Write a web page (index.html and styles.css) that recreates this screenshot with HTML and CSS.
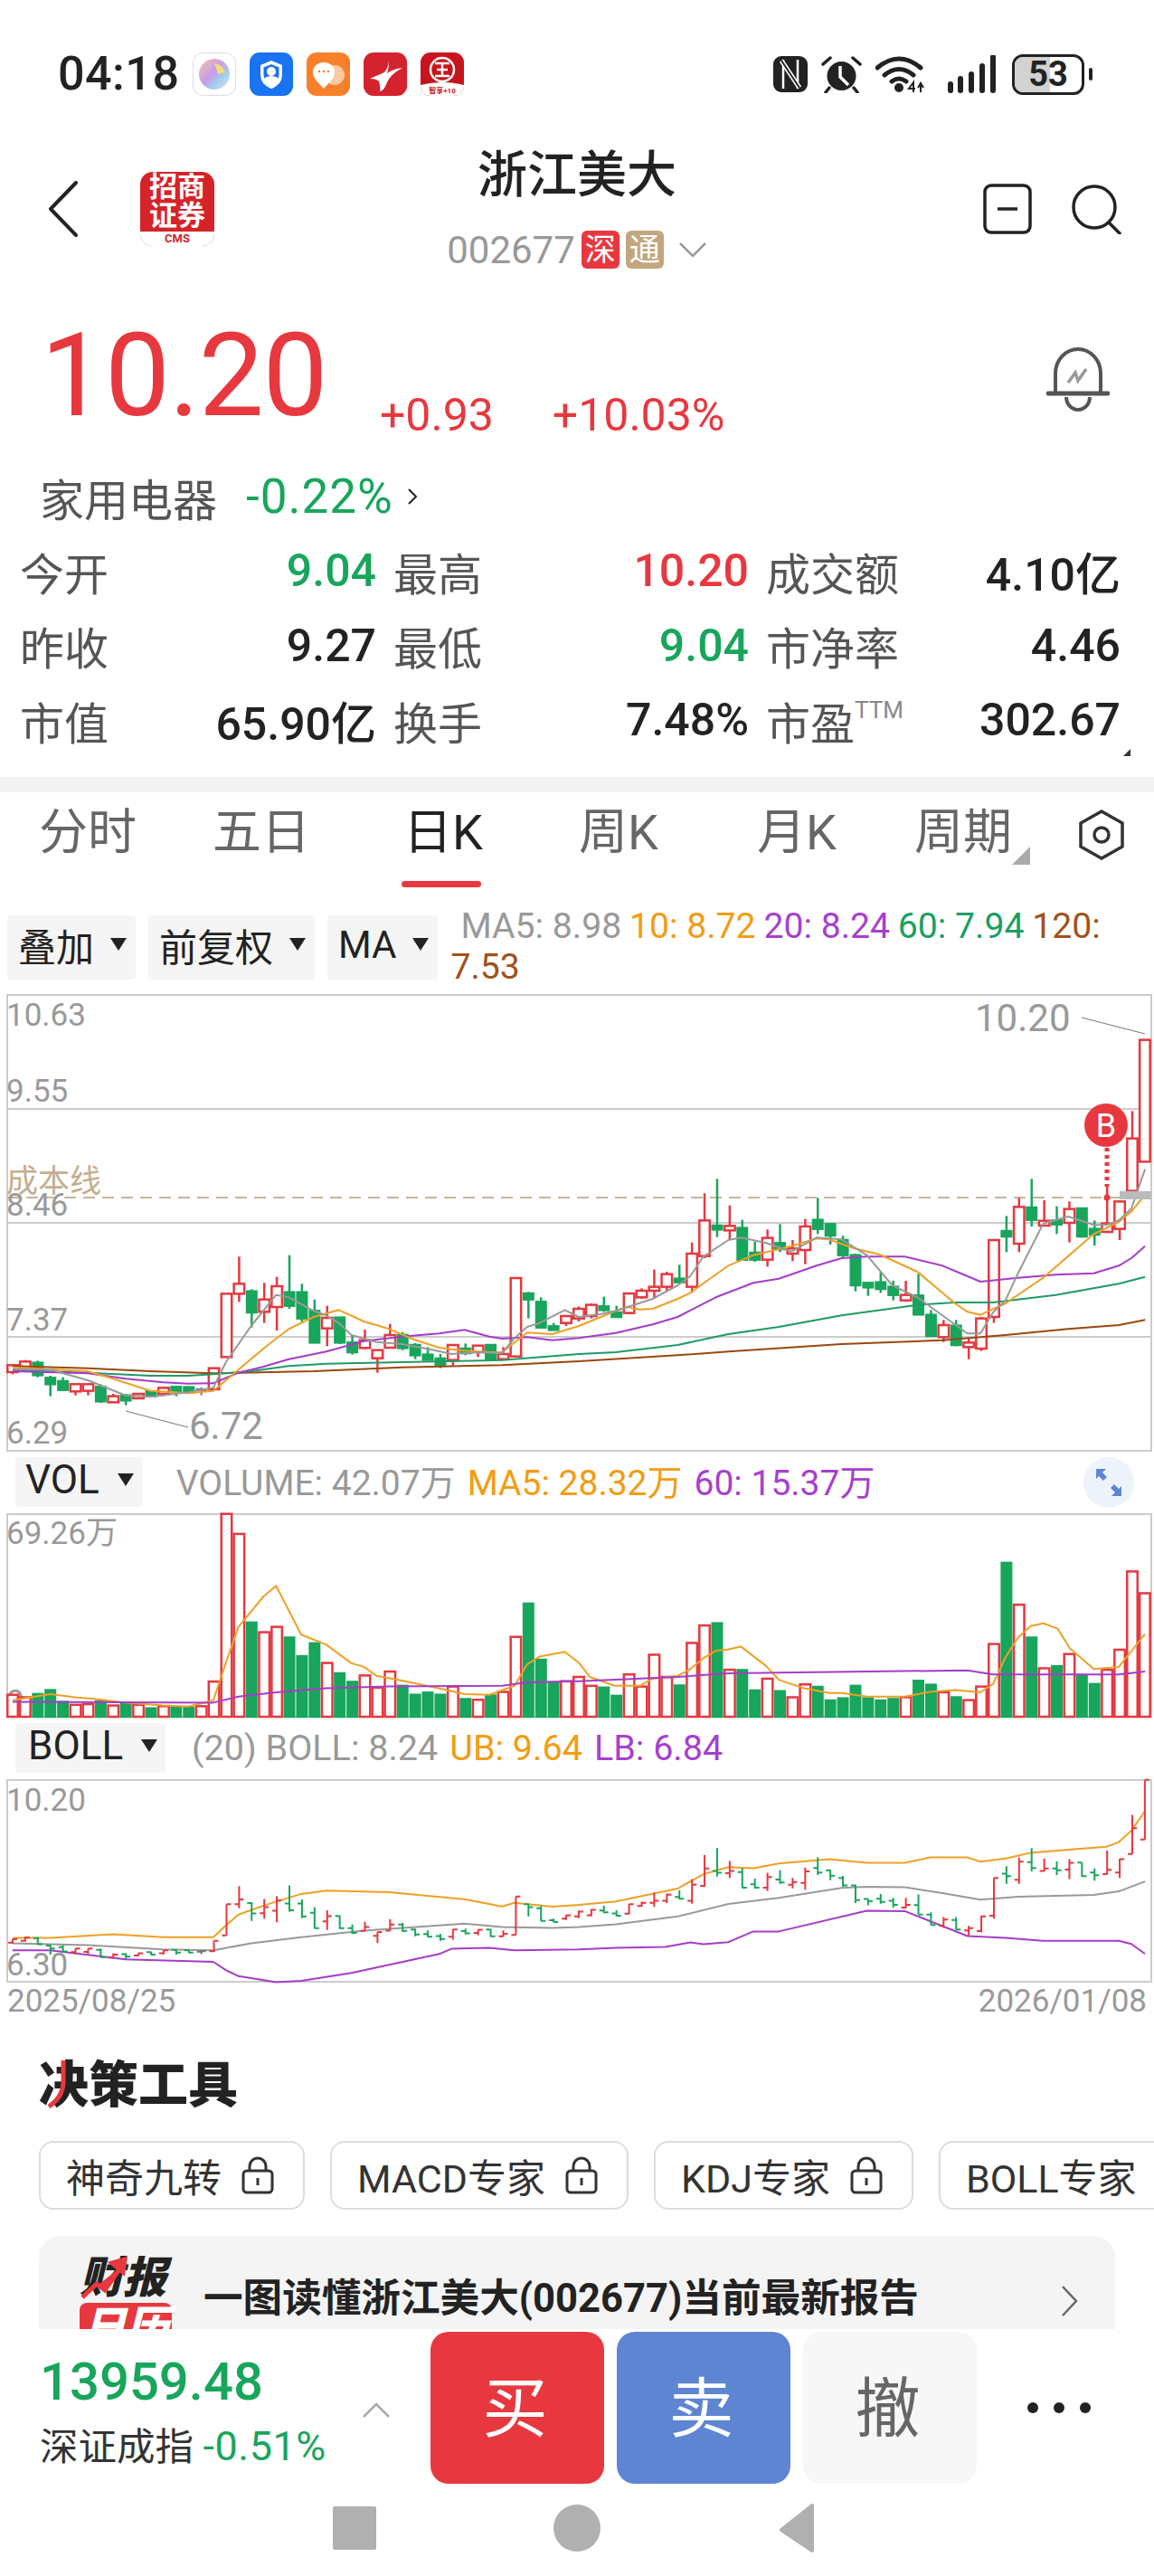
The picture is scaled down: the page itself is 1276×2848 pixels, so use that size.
FILE: index.html
```html
<!DOCTYPE html>
<html lang="zh-CN">
<head>
  <meta charset="UTF-8">
  <title>浙江美大 - 日K</title>
  <meta name="viewport" content="width=device-width, initial-scale=1.0">
  <link rel="stylesheet" href="styles.css">
</head>
<body>
<div class="screen">
  <div class="content">

    <!-- status bar -->
    <div class="status">
      <span class="clock">04:18</span>
      <div class="notif">
        <svg viewBox="0 0 48 48" width="48" height="48">
          <defs>
            <linearGradient id="orb" x1="0" y1="0" x2="1" y2="1">
              <stop offset="0" stop-color="#f7c9a0"/><stop offset=".45" stop-color="#c79be8"/><stop offset=".7" stop-color="#9fd4ee"/><stop offset="1" stop-color="#f5d6e0"/>
            </linearGradient>
          </defs>
          <rect x=".5" y=".5" width="47" height="47" rx="11" fill="#fff" stroke="#ddd"/>
          <circle cx="24" cy="24" r="17" fill="url(#orb)"/>
          <path d="M24 12q9 1 12 10l-8 2q-2-7-4-12z" fill="#f3dc7c"/>
        </svg>
        <svg viewBox="0 0 48 48" width="48" height="48">
          <rect width="48" height="48" rx="11" fill="#1a73f0"/>
          <path d="M24 9l12 5v11q0 10-12 15q-12-5-12-15v-11z" fill="#fff"/>
          <path d="M24 13l8.500 3.500v8q0 7-8.500 11q-8.500-4-8.500-11v-8z" fill="#1a73f0"/>
          <circle cx="24" cy="21" r="5" fill="#fff"/>
          <path d="M15 32q1-6 9-6t9 6q-3 6-9 8q-6-2-9-8z" fill="#fff"/>
        </svg>
        <svg viewBox="0 0 48 48" width="48" height="48">
          <rect width="48" height="48" rx="11" fill="#f9802a"/>
          <circle cx="31" cy="25" r="11" fill="#fbc9a0"/>
          <path d="M19 11c8 0 12 5 12 11c0 7-7 12-12 18c-5-6-12-11-12-18c0-6 4-11 12-11z" fill="#fff"/>
          <circle cx="14" cy="21" r="1.300" fill="#f9802a"/><circle cx="19" cy="21" r="1.300" fill="#f9802a"/><circle cx="24" cy="21" r="1.300" fill="#f9802a"/>
        </svg>
        <svg viewBox="0 0 48 48" width="48" height="48">
          <rect width="48" height="48" rx="11" fill="#d4232f"/>
          <path d="M27 7q2 8-4 15l-16 7q7 0 10 3q2 5 1 11q5-1 8-10q4-9 17-16q-10 1-17 6q3-8 1-16z" fill="#fff"/>
        </svg>
        <svg viewBox="0 0 48 48" width="48" height="48">
          <rect width="48" height="48" rx="11" fill="#c8141d"/>
          <path d="M0 36q24-6 48 0v1a11 11 0 0 1-11 11h-26a11 11 0 0 1-11-11z" fill="#fff"/>
          <circle cx="24" cy="19" r="13" fill="none" stroke="#fff" stroke-width="2.500"/>
          <path d="M16 12h16M24 12v14M18 19h12M16 26h16" stroke="#fff" stroke-width="2.500" fill="none"/>
          <text x="24" y="45" class="tiny-mark">智享+10</text>
        </svg>
      </div>
      <div class="sys">
        <svg viewBox="0 0 38 40" width="38" height="40">
          <rect width="38" height="40" rx="9" fill="#222"/>
          <path d="M11 4v32M27 4v32" stroke="#fff" stroke-width="2.500" fill="none"/>
          <path d="M9 5l20 30" stroke="#fff" stroke-width="5" fill="none"/>
          <path d="M9 5l20 30" stroke="#222" stroke-width="2" fill="none"/>
        </svg>
        <svg viewBox="0 0 45 42" width="45" height="42">
          <circle cx="22.500" cy="23" r="16" fill="#222"/>
          <path d="M21 12v12l9 9" stroke="#fff" stroke-width="3.500" fill="none"/>
          <path d="M2 10l8-7M43 10l-8-7M9 36l-4 5M36 36l4 5" stroke="#222" stroke-width="3.500" stroke-linecap="round"/>
        </svg>
        <svg viewBox="0 0 55 42" width="55" height="42">
          <path d="M2 14q24-20 48 0M10 22q16-13 32 0M18 29q8-6 16 0" stroke="#222" stroke-width="5" fill="none" stroke-linecap="round"/>
          <circle cx="26" cy="36" r="5" fill="#222"/>
          <path d="M42 41V30l-5 7h7M50 30v11M47 36l3-5 3 5" stroke="#222" stroke-width="2" fill="none"/>
        </svg>
        <svg viewBox="0 0 53 42" width="53" height="42">
          <path d="M3 32v7M14 26v13M26 21v18M38 12v27M50 2v37" stroke="#222" stroke-width="6" stroke-linecap="round"/>
        </svg>
        <div class="battery"><span class="level"></span><b>53</b></div>
        <span class="nub"></span>
      </div>
    </div>

    <!-- stock title -->
    <div class="topbar">
      <div class="topleft">
        <svg class="back" viewBox="0 0 34 62" width="34" height="62">
          <path d="M31 2L3 31l28 29" stroke="#222" stroke-width="4" fill="none" stroke-linecap="round" stroke-linejoin="round"/>
        </svg>
        <div class="broker">
          <div class="broker-name">招商<br>证券</div>
          <div class="broker-cms">CMS</div>
        </div>
      </div>
      <div class="topmid">
        <div class="title">浙江美大</div>
        <div class="code">
          <span>002677</span>
          <span class="tag tag-red">深</span>
          <span class="tag tag-gold">通</span>
          <svg class="down" viewBox="0 0 32 18" width="32" height="18"><path d="M2 2l14 14L30 2" stroke="#999" stroke-width="2.500" fill="none"/></svg>
        </div>
      </div>
      <div class="topright">
        <svg viewBox="0 0 54 56" width="54" height="56">
          <rect x="2" y="2" width="50" height="52" rx="7" fill="none" stroke="#222" stroke-width="3.500"/>
          <path d="M16 28h22" stroke="#222" stroke-width="3.500"/>
        </svg>
        <svg viewBox="0 0 56 56" width="56" height="56">
          <circle cx="26" cy="26" r="23" fill="none" stroke="#222" stroke-width="3.500"/>
          <path d="M42 43l12 12" stroke="#222" stroke-width="3.500" stroke-linecap="round"/>
        </svg>
      </div>
    </div>

    <!-- price -->
    <div class="quote">
      <span class="price">10.20</span>
      <span class="change">+0.93</span>
      <span class="change pct">+10.03%</span>
      <svg class="bell" viewBox="0 0 70 72" width="70" height="72">
        <path d="M10 50V30a25 27 0 0 1 50 0v20" fill="none" stroke="#555" stroke-width="4"/>
        <path d="M2 52h66" stroke="#555" stroke-width="5" stroke-linecap="round"/>
        <path d="M22 56a13 14 0 0 0 26 0" fill="none" stroke="#555" stroke-width="4"/>
        <path d="M24 40l8-11 3 9 9-13" fill="none" stroke="#999" stroke-width="3.500"/>
      </svg>
    </div>

    <div class="sector">
      <span class="sector-name">家用电器</span>
      <span class="sector-pct">-0.22%</span>
      <svg viewBox="0 0 12 20" width="12" height="20"><path d="M2 2l8 8-8 8" stroke="#222" stroke-width="2" fill="none"/></svg>
    </div>

    <div class="stats">
      <div class="stat"><span>今开</span><b class="fall">9.04</b></div>
      <div class="stat"><span>最高</span><b class="rise">10.20</b></div>
      <div class="stat"><span>成交额</span><b>4.10亿</b></div>
      <div class="stat"><span>昨收</span><b>9.27</b></div>
      <div class="stat"><span>最低</span><b class="fall">9.04</b></div>
      <div class="stat"><span>市净率</span><b>4.46</b></div>
      <div class="stat"><span>市值</span><b>65.90亿</b></div>
      <div class="stat"><span>换手</span><b>7.48%</b></div>
      <div class="stat"><span>市盈<sup>TTM</sup></span><b>302.67</b></div>
      <i class="corner"></i>
    </div>

    <div class="divider"></div>

    <!-- period tabs -->
    <div class="tabs">
      <div class="tab">分时</div>
      <div class="tab">五日</div>
      <div class="tab active">日K</div>
      <div class="tab">周K</div>
      <div class="tab">月K</div>
      <div class="tab more">周期</div>
      <svg class="hex" viewBox="0 0 52 58" width="52" height="58">
        <path d="M26 3l23 13v26L26 55 3 42V16z" fill="none" stroke="#333" stroke-width="3.500"/>
        <circle cx="26" cy="29" r="8" fill="none" stroke="#333" stroke-width="3.500"/>
      </svg>
    </div>

    <div class="toolbar">
      <div class="chip">叠加<i class="caret"></i></div>
      <div class="chip">前复权<i class="caret"></i></div>
      <div class="chip">MA<i class="caret"></i></div>
      <div class="legend">
        <span class="c-grey">MA5: 8.98</span>
        <span class="c-orange">10: 8.72</span>
        <span class="c-purple">20: 8.24</span>
        <span class="c-green">60: 7.94</span>
        <span class="c-brown">120:</span>
        <span class="c-brown">7.53</span>
      </div>
    </div>

    <!-- the svg viewBoxes use screen coordinates, chart.js draws into them -->
    <svg id="mainChart" class="chart" viewBox="0 1095 1276 512" width="1276" height="512">
      <rect class="frame" x="8" y="1099" width="1265" height="504"/>
      <path class="grid" d="M8 1225H1273M8 1351H1273M8 1477H1273"/>
      <path class="cost" d="M8 1323H1273"/>
      <text class="axis" x="7" y="1133">10.63</text>
      <text class="axis" x="7" y="1217">9.55</text>
      <text class="axis cost-label" x="7" y="1317">成本线</text>
      <text class="axis" x="7" y="1343">8.46</text>
      <text class="axis" x="7" y="1470">7.37</text>
      <text class="axis" x="7" y="1595">6.29</text>
      <text class="axis big" x="1078" y="1139">10.20</text>
      <text class="axis big" x="209" y="1590">6.72</text>
      <path class="leader" d="M1196 1124L1266 1142M139 1559L208 1577"/>
    </svg>

    <div class="ind-head">
      <div class="chip chip-ind">VOL<i class="caret"></i></div>
      <div class="ind-text">
        <span class="c-grey">VOLUME: 42.07万</span>
        <span class="c-orange">MA5: 28.32万</span>
        <span class="c-purple">60: 15.37万</span>
      </div>
      <div class="expand">
        <svg viewBox="0 0 36 36" width="36" height="36">
          <path d="M4 3h11l-4 4 5 5-4 4-5-5-3 3zM32 33H21l4-4-5-5 4-4 5 5 3-3z" fill="#5f86d3"/>
        </svg>
      </div>
    </div>
    <svg id="volChart" class="chart" viewBox="0 1670 1276 230" width="1276" height="230">
      <rect class="frame" x="8" y="1673" width="1265" height="224"/>
      <text class="axis" x="7" y="1706">69.26万</text>
      <text class="axis" x="7" y="1892">0</text>
    </svg>

    <div class="ind-head boll-head">
      <div class="chip chip-ind">BOLL<i class="caret"></i></div>
      <div class="ind-text">
        <span class="c-grey">(20) BOLL: 8.24</span>
        <span class="c-orange">UB: 9.64</span>
        <span class="c-purple">LB: 6.84</span>
      </div>
    </div>
    <svg id="bollChart" class="chart" viewBox="0 1964 1276 229" width="1276" height="229">
      <rect class="frame" x="8" y="1967" width="1265" height="223"/>
      <text class="axis" x="7" y="2001">10.20</text>
      <text class="axis" x="7" y="2183">6.30</text>
    </svg>

    <div class="dates"><span>2025/08/25</span><span>2026/01/08</span></div>

    <h2 class="tools-title">决策工具<svg viewBox="0 0 30 60" width="30" height="60"><path d="M27 3V28Q26 44 11 54" stroke="#e8383f" stroke-width="5" fill="none"/></svg></h2>

    <div class="tools">
      <div class="tool">神奇九转<svg class="lock" viewBox="0 0 36 42"><use href="#lockIcon"/></svg></div>
      <div class="tool">MACD专家<svg class="lock" viewBox="0 0 36 42"><use href="#lockIcon"/></svg></div>
      <div class="tool">KDJ专家<svg class="lock" viewBox="0 0 36 42"><use href="#lockIcon"/></svg></div>
      <div class="tool">BOLL专家</div>
    </div>
    <svg class="defs" width="0" height="0">
      <symbol id="lockIcon" viewBox="0 0 36 42">
        <path d="M9 16V11a9 9 0 0 1 18 0v5" fill="none" stroke="#333" stroke-width="3"/>
        <rect x="2" y="16" width="32" height="24" rx="4" fill="none" stroke="#333" stroke-width="3"/>
        <path d="M18 24v8" stroke="#333" stroke-width="3"/>
      </symbol>
    </svg>

    <div class="report">
      <div class="report-logo">
        <div class="report-top">财报<svg viewBox="0 0 60 50" width="60" height="50"><path d="M3 46l16-15 9 7 18-26M36 8l14-4-2 14z" stroke="#e8383f" stroke-width="5" fill="#e8383f"/></svg></div>
        <div class="report-box">日历</div>
      </div>
      <div class="report-text">一图读懂浙江美大(002677)当前最新报告</div>
      <svg class="report-go" viewBox="0 0 20 36" width="20" height="36"><path d="M2 2l15 16L2 34" stroke="#666" stroke-width="2.500" fill="none"/></svg>
    </div>
  </div>

  <div class="dock">
    <div class="trade">
      <div class="index">
        <div class="index-val">13959.48</div>
        <div class="index-sub">深证成指 <span>-0.51%</span></div>
      </div>
      <svg class="index-up" viewBox="0 0 32 18" width="32" height="18"><path d="M2 16L16 2l14 14" stroke="#aaa" stroke-width="2.500" fill="none"/></svg>
      <div class="btn btn-buy">买</div>
      <div class="btn btn-sell">卖</div>
      <div class="btn btn-undo">撤</div>
      <div class="dots"><i></i><i></i><i></i></div>
    </div>
    <div class="nav">
      <span class="nav-square"></span>
      <span class="nav-circle"></span>
      <svg viewBox="0 0 42 56" width="42" height="56"><path d="M38 3v50L4 30z" fill="#b0b0b0" stroke="#b0b0b0" stroke-width="4" stroke-linejoin="round"/></svg>
    </div>
  </div>
</div>
<script src="chart.js"></script>
</body>
</html>
```

FILE: styles.css
```css
* {
  box-sizing: border-box;
}
html, body {
  margin: 0;
  padding: 0;
}
body {
  font-family: Roboto, "Noto Sans CJK SC", sans-serif;
  background: white;
  color: #222;
}
.screen {
  width: 1276px;
  height: 2848px;
  overflow: hidden;
  display: flex;
  flex-direction: column;
}
.content {
  height: 2575px;
  overflow: hidden;
}

/* status bar */
.status {
  height: 130px;
  padding: 58px 0 0 64px;
  display: flex;
  align-items: flex-start;
}
.clock {
  font-size: 52px;
  line-height: 48px;
  font-weight: 500;
  width: 149px;
  letter-spacing: 0.5px;
}
.notif {
  display: flex;
  gap: 15px;
}
.sys {
  margin-left: auto;
  padding-right: 68px;
  display: flex;
  align-items: center;
  gap: 15px;
  height: 48px;
}
.sys svg:nth-child(4) {
  margin-left: 10px;
}
.battery {
  position: relative;
  width: 80px;
  height: 45px;
  border: 3.5px solid #222;
  border-radius: 12px;
  overflow: hidden;
  display: flex;
  align-items: center;
  justify-content: center;
  margin-left: 3px;
}
.battery .level {
  position: absolute;
  left: 0;
  top: 0;
  bottom: 0;
  width: 53%;
  background: #d2d2d2;
}
.battery b {
  position: relative;
  font-size: 38px;
  line-height: 38px;
  font-weight: 700;
}
.nub {
  width: 4px;
  height: 14px;
  background: #222;
  border-radius: 2px;
  margin-left: -10px;
}
.tiny-mark {
  font-size: 8px;
  font-weight: 700;
  fill: #c8141d;
  text-anchor: middle;
}

/* title */
.topbar {
  height: 190px;
  padding-top: 33px;
  display: grid;
  grid-template-columns: 1fr auto 1fr;
}
.topleft {
  display: flex;
  align-items: flex-start;
  padding: 27px 0 0 53px;
}
.back {
  margin-top: 10px;
}
.broker {
  margin-left: 68px;
  width: 82px;
  height: 82px;
  border-radius: 14px;
  background: #d5232a;
  overflow: hidden;
  color: white;
  text-align: center;
}
.broker-name {
  height: 66px;
  padding-top: 1px;
  font-size: 31px;
  line-height: 32px;
  font-weight: 700;
}
.broker-cms {
  height: 16px;
  background: white;
  color: #d5232a;
  font-size: 13px;
  line-height: 16px;
  font-weight: 700;
}
.topmid {
  text-align: center;
}
.title {
  font-size: 55px;
  line-height: 60px;
  font-weight: 500;
}
.code {
  margin-top: 32px;
  height: 42px;
  display: flex;
  align-items: center;
  color: #999;
  font-size: 42px;
}
.tag {
  width: 42px;
  height: 42px;
  border-radius: 6px;
  color: white;
  font-size: 34px;
  line-height: 42px;
  margin-left: 7px;
  text-align: center;
}
.tag-red {
  background: #e8383f;
}
.tag-gold {
  background: #c2a77e;
}
.down {
  margin-left: 16px;
}
.topright {
  display: flex;
  justify-content: flex-end;
  align-items: flex-start;
  padding: 40px 36px 0 0;
  gap: 43px;
}

/* price */
.quote {
  height: 199px;
  padding: 31px 0 0 45px;
  display: flex;
  align-items: flex-start;
  color: #e8383f;
}
.price {
  font-size: 128px;
  line-height: 128px;
  width: 375px;
  letter-spacing: -1px;
}
.change {
  font-size: 50px;
  line-height: 50px;
  margin-top: 83px;
}
.pct {
  margin-left: 65px;
}
.bell {
  margin: 32px 49px 0 auto;
}
.sector {
  height: 60px;
  padding-left: 44px;
  display: flex;
  align-items: center;
}
.sector-name {
  color: #555;
  width: 228px;
  font-size: 49px;
}
.sector-pct {
  color: #18a55c;
  width: 178px;
  font-size: 53px;
  letter-spacing: 1px;
}

.stats {
  position: relative;
  margin-top: 11px;
  padding-left: 22px;
  display: grid;
  grid-template-columns: 394px 393px 392px;
  grid-auto-rows: 82.500px;
  column-gap: 19px;
  font-size: 50px;
}
.stat {
  display: flex;
  justify-content: space-between;
  align-items: center;
}
.stat span {
  color: #555;
  font-size: 49px;
}
.stat b {
  font-weight: 500;
  color: #222;
}
.stat sup {
  font-size: 26px;
  line-height: 0;
  color: #888;
  vertical-align: 24px;
}
.stat b.fall {
  color: #18a55c;
}
.stat b.rise {
  color: #e8383f;
}
.corner {
  position: absolute;
  right: 26px;
  bottom: 2px;
  border-style: solid;
  border-width: 0 0 8px 8px;
  border-color: transparent transparent #333 transparent;
}
.divider {
  margin-top: 21px;
  height: 17px;
  background: #f3f3f3;
}

/* tabs */
.tabs {
  position: relative;
  display: grid;
  grid-template-columns: 194px 190px 212px 176px 218px 150px;
  padding-bottom: 31px;
  font-size: 54px;
  color: #666;
}
.tab {
  position: relative;
  height: 105px;
  line-height: 90px;
  text-align: center;
}
.tab.active {
  color: #222;
}
.tab.active::after {
  content: "";
  position: absolute;
  left: 60px;
  width: 88px;
  bottom: 0;
  height: 7px;
  border-radius: 4px;
  background: #e8383f;
}
.tab.more::after {
  content: "";
  position: absolute;
  right: 1px;
  top: 60px;
  border-style: solid;
  border-width: 0 0 20px 20px;
  border-color: transparent transparent #aaa transparent;
}
.hex {
  position: absolute;
  left: 1192px;
  top: 18px;
}

.toolbar {
  height: 84px;
  padding-left: 8px;
  display: flex;
  align-items: flex-start;
  gap: 14px;
}
.chip {
  height: 71px;
  padding: 0 10px 6px 12px;
  background: #f5f5f5;
  border-radius: 4px;
  display: flex;
  align-items: center;
  font-size: 42px;
  color: #222;
}
.caret {
  margin-left: 18px;
  border-style: solid;
  border-width: 14px 9px 0 9px;
  border-color: #222 transparent transparent transparent;
}
.legend {
  flex: 1;
  margin-top: -10px;
  font-size: 39.200px;
  line-height: 45px;
  text-indent: 11px;
  padding-right: 40px;
}
.legend span {
  margin-right: -1px;
}
.c-grey { color: #999; }
.c-orange { color: #f39c12; }
.c-purple { color: #a73fd0; }
.c-green { color: #1a9f63; }
.c-brown { color: #a0521a; }

/* charts */
.chart {
  display: block;
}
.frame {
  fill: none;
  stroke: #ccc;
  stroke-width: 2;
}
.grid {
  stroke: #ccc;
  stroke-width: 2;
}
.cost {
  stroke: #c8b49a;
  stroke-width: 2;
  stroke-dasharray: 13 8;
}
.axis {
  font-size: 35px;
  fill: #999;
}
.axis.big {
  font-size: 42px;
}
.cost-label {
  fill: #c4ae90;
}
.leader {
  stroke: #777;
  stroke-width: 1;
  fill: none;
}
.up {
  stroke: #e5383f;
  stroke-width: 2.500;
  fill: white;
}
.dn {
  stroke: #18a55c;
  stroke-width: 2.500;
  fill: #18a55c;
}
.flat {
  stroke: #777;
  stroke-width: 2;
  fill: #777;
}
.ohlc {
  fill: none;
  stroke-width: 2;
}
.ma {
  fill: none;
  stroke-width: 2;
  stroke-linejoin: round;
}
.ma-grey { stroke: #999; }
.ma-orange { stroke: #efa024; }
.ma-purple { stroke: #a53cc8; }
.ma-green { stroke: #1f9a66; }
.ma-brown { stroke: #99480f; }
.cost-box {
  fill: #bbb;
}
.b-pin {
  stroke: #e5383f;
  stroke-width: 3;
}
.b-dash {
  stroke-dasharray: 4 4;
  stroke-width: 5;
}
.b-dot,
.b-ball {
  fill: #e8383f;
}
.b-text {
  font-size: 36px;
  fill: white;
  text-anchor: middle;
}

.ind-head {
  height: 63px;
  padding: 3px 0 0 17px;
  display: flex;
  align-items: flex-start;
}
.boll-head {
  height: 64px;
  padding-top: 4px;
}
.chip-ind {
  height: 55px;
  padding: 0 9px 4px 11px;
  font-size: 44px;
}
.chip-ind .caret {
  margin-left: 20px;
}
.boll-head .chip-ind {
  padding-left: 14px;
}
.ind-text {
  margin-left: 38px;
  height: 55px;
  padding-bottom: 4px;
  display: flex;
  align-items: center;
  gap: 13px;
  font-size: 39px;
}
.boll-head .ind-text {
  margin-left: 29px;
  padding-bottom: 0;
  font-size: 39.500px;
}
.expand {
  margin-left: auto;
  margin-right: 22px;
  width: 56px;
  height: 56px;
  border-radius: 50%;
  background: #eef3fb;
  display: flex;
  align-items: center;
  justify-content: center;
}

.dates {
  height: 38px;
  padding: 0 8px;
  display: flex;
  justify-content: space-between;
  font-size: 35px;
  line-height: 38px;
  color: #999;
}

/* tools */
.tools-title {
  position: relative;
  margin: 43px 0 0 43px;
  font-size: 55px;
  line-height: 60px;
  font-weight: 900;
  color: #222;
}
.tools-title svg {
  position: absolute;
  left: 0;
  top: 0;
}
.tools {
  margin: 32px 0 0 43px;
  display: flex;
  gap: 28px;
}
.tool {
  height: 76px;
  padding: 0 32px 0 28px;
  flex-shrink: 0;
  border: 2px solid #ddd;
  border-radius: 16px;
  display: flex;
  align-items: center;
  font-size: 43px;
  color: #333;
}
.lock {
  width: 36px;
  height: 42px;
  margin-left: 22px;
}
.defs {
  display: block;
  height: 0;
}
.report {
  position: relative;
  margin: 29px 43px 0;
  height: 150px;
  border-radius: 24px;
  background: #f4f4f4;
  display: flex;
  align-items: flex-start;
}
.report-logo {
  margin: 24px 0 0 45px;
  width: 102px;
}
.report-top {
  position: relative;
  font-size: 48px;
  line-height: 46px;
  font-weight: 900;
  font-style: italic;
  white-space: nowrap;
}
.report-top svg {
  position: absolute;
  left: 0;
  top: -2px;
}
.report-box {
  margin-top: 4px;
  height: 60px;
  background: #e8383f;
  border-radius: 8px;
  color: white;
  font-size: 48px;
  line-height: 56px;
  font-weight: 900;
  font-style: italic;
  text-align: center;
  white-space: nowrap;
}
.report-text {
  margin: 40px 0 0 35px;
  font-size: 43.600px;
  line-height: 60px;
  font-weight: 700;
  white-space: nowrap;
}
.report-go {
  position: absolute;
  right: 40px;
  top: 54px;
}

/* bottom dock */
.dock {
  height: 273px;
  background: white;
}
.trade {
  height: 171px;
  padding-top: 3px;
  display: flex;
  align-items: flex-start;
}
.index {
  width: 402px;
  padding: 25px 0 0 44px;
}
.index-val {
  font-size: 58px;
  line-height: 60px;
  font-weight: 500;
  color: #18a55c;
}
.index-sub {
  margin-top: 17px;
  font-size: 42.500px;
  line-height: 50px;
  color: #333;
  white-space: nowrap;
}
.index-sub span {
  color: #18a55c;
  font-size: 45px;
  letter-spacing: 0.5px;
}
.index-up {
  margin-top: 78px;
  margin-left: -2px;
  margin-right: 2px;
}
.btn {
  width: 192px;
  height: 168px;
  padding: 0 5px 11px 0;
  border-radius: 20px;
  display: flex;
  align-items: center;
  justify-content: center;
  font-size: 72px;
  color: white;
  margin-right: 14px;
}
.btn-buy {
  margin-left: 42px;
  background: #e8383f;
}
.btn-sell {
  background: #5e85d2;
}
.btn-undo {
  background: #f7f7f7;
  color: #666;
  margin-right: 0;
}
.dots {
  margin: 78px 0 0 56px;
  display: flex;
  gap: 17px;
}
.dots i {
  width: 12px;
  height: 12px;
  border-radius: 50%;
  background: #222;
}
.nav {
  padding-left: 368px;
  height: 102px;
  display: flex;
  align-items: center;
  gap: 196px;
  padding-bottom: 4px;
}
.nav-square {
  width: 48px;
  height: 48px;
  border-radius: 2px;
  background: #b0b0b0;
}
.nav-circle {
  width: 52px;
  height: 52px;
  border-radius: 50%;
  background: #b0b0b0;
}
```

FILE: chart.js
```js
// candles were read off the screenshot: type, body top, body bottom, high, low
// y is in "chart units", see toY. x comes from the index.
const candles = [
  ['u',1255,1278,1255,1285],['u',1243,1265,1238,1270],['d',1247,1288,1240,1295],['d',1297,1318,1290,1358],
  ['d',1308,1337,1295,1340],['u',1318,1342,1318,1355],['u',1318,1340,1318,1355],['d',1327,1375,1318,1380],
  ['u',1358,1378,1350,1378],['d',1355,1372,1350,1388],['u',1350,1365,1348,1368],['d',1342,1358,1338,1362],
  ['u',1330,1350,1328,1358],['d',1327,1345,1325,1358],['d',1328,1345,1325,1348],['f',1335,1338,1328,1355],
  ['u',1265,1335,1265,1340],['u',1018,1228,1018,1228],['u',985,1018,895,1045],['d',1010,1080,1003,1130],
  ['u',1037,1078,982,1115],['u',993,1062,962,1140],['d',1013,1058,890,1068],['d',1013,1100,985,1112],
  ['d',1075,1180,1037,1182],['u',1098,1133,1058,1192],['d',1097,1180,1095,1185],['d',1180,1212,1155,1220],
  ['u',1172,1198,1137,1202],['u',1205,1232,1205,1280],['u',1155,1197,1118,1198],['d',1155,1198,1145,1205],
  ['d',1188,1222,1182,1235],['d',1220,1237,1195,1240],['d',1233,1253,1218,1265],['u',1188,1238,1185,1258],
  ['d',1200,1215,1183,1222],['u',1190,1212,1188,1228],['d',1188,1235,1185,1240],['u',1218,1235,1195,1238],
  ['u',966,1226,966,1226],['d',1017,1037,1012,1100],['d',1045,1130,1030,1132],['d',1126,1138,1115,1140],
  ['u',1092,1115,1090,1125],['u',1068,1100,1060,1110],['u',1055,1092,1050,1100],['d',1060,1072,1028,1078],
  ['d',1080,1095,1058,1098],['u',1017,1082,1015,1085],['u',1008,1030,1000,1035],['u',995,1008,938,1035],
  ['u',953,995,945,1010],['d',968,980,922,985],['u',885,995,848,1015],['u',775,893,685,900],
  ['d',792,805,637,830],['u',793,808,725,840],['d',800,905,773,908],['d',882,905,845,912],
  ['u',833,905,805,928],['d',850,870,787,880],['u',868,885,840,910],['u',795,873,770,920],
  ['d',773,803,700,820],['d',787,825,785,855],['d',840,890,826,900],['d',890,990,885,1010],
  ['d',982,997,980,1025],['d',980,1002,948,1015],['d',995,1022,975,1040],['u',1022,1040,975,1045],
  ['d',1024,1087,952,1088],['d',1088,1158,1072,1160],['u',1122,1162,1105,1178],['d',1124,1188,1105,1192],
  ['u',1180,1195,1165,1235],['u',1100,1200,1095,1208],['u',840,1095,840,1115],['d',810,828,760,880],
  ['u',730,852,700,880],['d',732,773,637,795],['u',776,792,708,795],['d',775,788,728,820],
  ['u',737,783,712,848],['d',735,828,735,832],['d',803,822,775,858],['u',785,813,655,815],
  ['u',712,803,710,840],['u',503,677,412,677],['u',176,580,176,580]
];

// volume bar tops, same index as candles
const volTops = [690,697,688,677,710,718,716,708,720,712,718,728,722,725,726,722,653,184,240,488,515,500,530,582,546,601,630,654,636,670,625,665,690,684,690,667,702,704,692,682,528,435,592,655,652,640,665,670,693,633,667,578,640,664,545,496,490,620,621,678,645,680,697,661,668,706,700,665,700,706,702,697,651,662,683,697,705,667,548,321,438,530,616,610,576,636,660,620,564,345,406];

// line points: x in chart units, the second half of the chart starts at 1568
const right = pts => pts.map(p => [p[0] + 1568, p[1]]);

const maLines = {
  'ma-brown': [[34,1258],[238,1265],[408,1275],[578,1282],[850,1275],[1088,1262],[1360,1255],[1568,1242]].concat(right([[268,1222],[405,1210],[712,1185],[985,1172],[1156,1155],[1326,1135],[1463,1122],[1534,1105]])),
  'ma-green': [[34,1272],[238,1280],[408,1290],[510,1290],[578,1285],[680,1275],[782,1258],[884,1250],[1088,1245],[1360,1238],[1568,1218]].concat(right([[100,1212],[268,1188],[405,1152],[542,1128],[712,1090],[917,1055],[1019,1047],[1122,1047],[1292,1022],[1463,985],[1534,962]])),
  'ma-purple': [[34,1275],[238,1282],[340,1300],[442,1312],[510,1316],[578,1315],[646,1280],[714,1260],[782,1235],[884,1210],[986,1175],[1088,1160],[1190,1150],[1258,1138],[1326,1160],[1360,1167],[1428,1162],[1496,1172],[1568,1165]].concat(right([[100,1148],[200,1120],[268,1095],[371,1030],[473,982],[542,968],[644,925],[712,900],[780,895],[883,895],[985,925],[1053,960],[1088,978],[1190,965],[1292,955],[1395,950],[1463,925],[1497,900],[1534,860]])),
  'ma-orange': [[34,1262],[238,1275],[306,1300],[408,1340],[510,1348],[578,1340],[646,1270],[714,1200],[782,1135],[850,1095],[918,1072],[986,1110],[1054,1135],[1122,1170],[1190,1197],[1258,1207],[1326,1212],[1360,1212],[1394,1180],[1428,1147],[1496,1152],[1568,1125]].concat(right([[100,1075],[130,1062],[165,1070],[200,1068],[268,1035],[302,1015],[405,925],[473,890],[576,860],[644,835],[678,838],[746,868],[815,888],[917,945],[1019,1050],[1053,1078],[1088,1088],[1156,1050],[1258,965],[1395,820],[1463,780],[1497,745],[1534,690]])),
  'ma-grey': [[34,1268],[136,1270],[238,1305],[340,1355],[408,1360],[510,1345],[578,1330],[612,1245],[680,1125],[748,1022],[782,1030],[850,1075],[884,1090],[918,1115],[952,1155],[1020,1178],[1088,1185],[1156,1200],[1224,1218],[1292,1212],[1360,1215],[1394,1165],[1428,1128],[1462,1115],[1530,1072],[1568,1095]].concat(right([[60,1085],[100,1075],[200,1035],[268,990],[302,960],[337,895],[405,840],[440,832],[508,850],[576,878],[644,832],[712,838],[780,890],[849,990],[917,1030],[985,1090],[1053,1150],[1088,1150],[1122,1080],[1156,1040],[1190,950],[1258,785],[1326,762],[1395,790],[1430,790],[1463,775],[1497,735],[1534,605]]))
};

const volLines = {
  'ma-orange': [[34,705],[136,688],[204,697],[272,703],[340,712],[442,720],[510,723],[578,705],[612,600],[646,500],[714,415],[748,385],[816,522],[884,550],[952,602],[986,612],[1020,637],[1088,650],[1156,665],[1224,680],[1258,688],[1326,690],[1394,665],[1428,605],[1462,583],[1530,570],[1568,600]].concat(right([[30,640],[97,665],[165,665],[200,645],[268,637],[302,618],[337,588],[371,567],[405,563],[439,555],[508,610],[542,648],[610,672],[678,685],[712,685],[780,695],[883,695],[951,682],[1019,677],[1088,683],[1122,660],[1156,585],[1190,530],[1224,498],[1258,490],[1297,505],[1330,560],[1395,618],[1463,612],[1534,520]])),
  'ma-purple': [[34,710],[578,712],[646,695],[748,683],[884,672],[1054,667],[1360,665],[1428,655],[1568,652]].concat(right([[100,648],[268,640],[405,630],[780,625],[1053,622],[1122,633],[1463,633],[1534,625]]))
};

const bollLines = {
  'ma-grey': [[34,1385],[238,1390],[442,1402],[578,1405],[680,1385],[816,1368],[986,1350],[1258,1330],[1360,1340],[1496,1342],[1568,1340]].concat(right([[100,1332],[268,1310],[405,1275],[542,1258],[712,1230],[780,1227],[883,1228],[985,1245],[1088,1263],[1190,1255],[1395,1250],[1463,1240],[1534,1212]])),
  'ma-orange': [[34,1370],[136,1370],[306,1360],[442,1368],[578,1368],[612,1335],[646,1305],[714,1280],[816,1247],[884,1238],[1054,1242],[1258,1262],[1360,1282],[1394,1272],[1496,1283],[1568,1278]].concat(right([[100,1268],[268,1232],[337,1192],[405,1172],[473,1175],[542,1162],[678,1150],[780,1160],[883,1160],[951,1145],[1053,1145],[1088,1157],[1156,1148],[1224,1132],[1326,1123],[1429,1115],[1463,1102],[1497,1070],[1534,1015]])),
  'ma-purple': [[34,1405],[136,1405],[340,1430],[578,1437],[612,1460],[646,1477],[748,1494],[816,1490],[952,1468],[1190,1415],[1224,1400],[1326,1398],[1394,1405],[1568,1402]].concat(right([[100,1398],[234,1395],[302,1383],[337,1388],[405,1382],[473,1352],[542,1352],[780,1294],[883,1295],[1053,1365],[1156,1370],[1258,1378],[1463,1378],[1497,1387],[1534,1415]]))
};

const toX = z => z / 2.45;
const toY = z => 1090 + z / 3;
const toVolY = z => 1600 + z / 2.53;
const candleX = i => 14 + 13.91 * i;
// the boll panel redraws the same prices on a smaller scale
const toBollY = z => 1967 + (toY(z) - 1149) * 0.49;

function add(svg, tag, attrs) {
  const el = document.createElementNS('http://www.w3.org/2000/svg', tag);
  for (const k in attrs) el.setAttribute(k, attrs[k]);
  svg.appendChild(el);
  return el;
}

function drawLines(svg, lines, yFn) {
  for (const cls in lines) {
    const points = lines[cls].map(p => toX(p[0]).toFixed(1) + ',' + yFn(p[1]).toFixed(1)).join(' ');
    add(svg, 'polyline', { class: 'ma ' + cls, points });
  }
}

const typeClass = { u: 'up', d: 'dn', f: 'flat' };

const mainChart = document.getElementById('mainChart');
candles.forEach((c, i) => {
  const x = candleX(i);
  const cls = typeClass[c[0]];
  add(mainChart, 'line', { class: cls, x1: x, x2: x, y1: toY(c[3]), y2: toY(c[4]) });
  const w = c[0] === 'u' ? 11.5 : 10.5;
  add(mainChart, 'rect', { class: cls, x: x - w / 2, y: toY(c[1]), width: w, height: toY(c[2]) - toY(c[1]) });
});
drawLines(mainChart, maLines, toY);

// cost box and the buy marker
add(mainChart, 'rect', { class: 'cost-box', x: 1238, y: 1316, width: 35, height: 9 });
add(mainChart, 'line', { class: 'b-pin b-dash', x1: 1224, x2: 1224, y1: 1268, y2: 1311 });
add(mainChart, 'circle', { class: 'b-dot', cx: 1224, cy: 1323, r: 3.5 });
add(mainChart, 'circle', { class: 'b-ball', cx: 1223, cy: 1243, r: 24 });
add(mainChart, 'text', { class: 'b-text', x: 1223, y: 1256 }).textContent = 'B';

const volChart = document.getElementById('volChart');
volTops.forEach((top, i) => {
  const up = candles[i][0] !== 'd';
  const w = up ? 11.5 : 10.5;
  const y = toVolY(top);
  add(volChart, 'rect', { class: up ? 'up' : 'dn', x: candleX(i) - w / 2, y, width: w, height: 1897 - y });
});
drawLines(volChart, volLines, toVolY);

const bollChart = document.getElementById('bollChart');
drawLines(bollChart, bollLines, toVolY);
candles.forEach((c, i) => {
  const x = candleX(i);
  const hi = toBollY(c[3]), lo = toBollY(c[4]);
  const top = toBollY(c[1]), bottom = toBollY(c[2]);
  // red: open on the left is the lower end of the body. green the other way round
  const left = c[0] === 'd' ? top : bottom;
  const rightEnd = c[0] === 'd' ? bottom : top;
  const d = `M${x} ${hi}V${lo}M${x - 5} ${left}H${x}M${x} ${rightEnd}H${x + 5}`;
  add(bollChart, 'path', { class: 'ohlc ' + typeClass[c[0]], d });
});
```
